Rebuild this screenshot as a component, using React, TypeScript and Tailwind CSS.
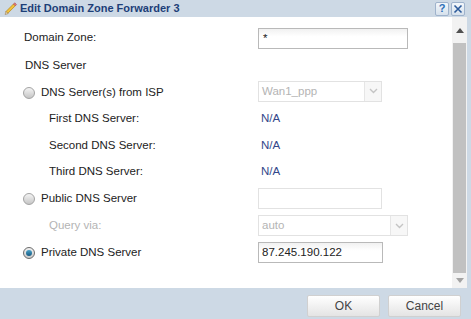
import React from 'react';

// Small radio bullet, grey when off, blue dot when checked
function Radio({ checked = false }: { checked?: boolean }) {
  if (checked) {
    return (
      <span className="flex h-[12px] w-[12px] items-center justify-center rounded-full border border-[#6b6b6b] bg-gradient-to-b from-[#f2f2f2] to-[#c9c9c9]">
        <span className="h-[6px] w-[6px] rounded-full bg-gradient-to-b from-[#4aa3c9] to-[#155a82]" />
      </span>
    );
  }
  return (
    <span className="h-[12px] w-[12px] rounded-full border border-[#a3a3a3] bg-gradient-to-b from-[#f4f4f4] to-[#c6c6c6]" />
  );
}

function Chevron({ color = '#c4c4c4' }: { color?: string }) {
  return (
    <svg width="9" height="6" viewBox="0 0 9 6" fill="none">
      <path d="M1 1l3.5 3.5L8 1" stroke={color} strokeWidth="1.4" />
    </svg>
  );
}

function Select({ value, width }: { value: string; width: string }) {
  return (
    <div className={`flex h-[21px] ${width} border border-[#e2e2e2] bg-white`}>
      <span className="flex-1 pl-[3px] leading-[19px] text-[#b4b4b4]">{value}</span>
      <span className="flex w-[17px] items-center justify-center border-l border-[#e6e6e6] bg-[#f7f7f7]">
        <Chevron />
      </span>
    </div>
  );
}

function Row({ h, children }: { h: string; children: React.ReactNode }) {
  return <div className={`flex items-center ${h}`}>{children}</div>;
}

export default function App() {
  return (
    <div
      className="flex h-[319px] w-[471px] flex-col bg-[#cdd9e5] text-[11.5px] text-[#222]"
      style={{ fontFamily: '"Liberation Sans", Arial, sans-serif' }}
    >
      {/* Title bar */}
      <div className="flex h-[17px] items-center pl-[3px] pr-[6px]">
        <svg width="15" height="15" viewBox="0 0 15 15">
          <path d="M3 10.5L10.5 3l1.8 1.8L4.8 12.3z" fill="#f2c23a" stroke="#b58515" strokeWidth="0.7" />
          <path d="M10.5 3l1.2-1.2 1.8 1.8-1.2 1.2z" fill="#e77a7a" stroke="#a54a4a" strokeWidth="0.6" />
          <path d="M3 10.5l-0.9 3 3-0.9z" fill="#f4dfb0" stroke="#8a6a3a" strokeWidth="0.5" />
        </svg>
        <span className="ml-[2px] text-[11px] font-bold text-[#1d3f78]">Edit Domain Zone Forwarder 3</span>
        <div className="ml-auto flex gap-[2px]">
          <span className="flex h-[14px] w-[14px] items-center justify-center rounded-[2px] border border-[#9fb3cc] bg-gradient-to-b from-[#f3f7fb] to-[#d6e1ec] text-[11px] font-bold leading-none text-[#2c6fb8]">
            ?
          </span>
          <span className="flex h-[14px] w-[14px] items-center justify-center rounded-[2px] border border-[#9fb3cc] bg-gradient-to-b from-[#f3f7fb] to-[#d6e1ec]">
            <svg width="10" height="10" viewBox="0 0 10 10">
              <path d="M1.5 1.5l7 7M8.5 1.5l-7 7" stroke="#2c5a9a" strokeWidth="1.6" />
            </svg>
          </span>
        </div>
      </div>

      {/* Body */}
      <div className="flex h-[271px]">
        <div className="flex-1 bg-white pt-[7px]">
          <Row h="h-[28px]">
            <span className="w-[258px] pl-[24px]">Domain Zone:</span>
            <div className="h-[21px] w-[150px] border border-[#b9b9b9] bg-gradient-to-b from-[#f1f1f1] to-white to-40% pl-[4px] leading-[19px]">
              *
            </div>
          </Row>
          <Row h="h-[28px]">
            <span className="pl-[25px]">DNS Server</span>
          </Row>
          <Row h="h-[25px]">
            <div className="flex w-[258px] items-center gap-[6px] pl-[23px]">
              <Radio />
              <span>DNS Server(s) from ISP</span>
            </div>
            <div className="-mt-[3px]">
              <Select value="Wan1_ppp" width="w-[124px]" />
            </div>
          </Row>
          <Row h="h-[27px]">
            <span className="w-[258px] pl-[49px]">First DNS Server:</span>
            <span className="pl-[3px] text-[#33478a]">N/A</span>
          </Row>
          <Row h="h-[27px]">
            <span className="w-[258px] pl-[49px]">Second DNS Server:</span>
            <span className="pl-[3px] text-[#33478a]">N/A</span>
          </Row>
          <Row h="h-[26px]">
            <span className="w-[258px] pl-[49px]">Third DNS Server:</span>
            <span className="pl-[3px] text-[#33478a]">N/A</span>
          </Row>
          <Row h="h-[27px]">
            <div className="flex w-[258px] items-center gap-[6px] pl-[23px]">
              <Radio />
              <span>Public DNS Server</span>
            </div>
            <div className="h-[21px] w-[124px] border border-[#e2e2e2] bg-white" />
          </Row>
          <Row h="h-[27px]">
            <span className="w-[258px] pl-[49px] text-[#b4b4b4]">Query via:</span>
            <Select value="auto" width="w-[150px]" />
          </Row>
          <Row h="h-[27px]">
            <div className="flex w-[258px] items-center gap-[6px] pl-[23px]">
              <Radio checked />
              <span>Private DNS Server</span>
            </div>
            <div className="h-[21px] w-[125px] border border-[#b9b9b9] bg-gradient-to-b from-[#f1f1f1] to-white to-40% pl-[3px] leading-[19px]">
              87.245.190.122
            </div>
          </Row>
        </div>

        {/* Scrollbar */}
        <div className="flex w-[15px] flex-col items-center bg-[#f2f2f2]">
          <div className="flex h-[26px] w-full items-center justify-center">
            <svg width="8" height="5" viewBox="0 0 8 5">
              <path d="M0 5L4 0l4 5z" fill="#505050" />
            </svg>
          </div>
          <div className="h-[230px] w-[13px] bg-[#c1c1c1]" />
          <div className="flex flex-1 w-full items-center justify-center">
            <svg width="8" height="5" viewBox="0 0 8 5">
              <path d="M0 0l4 5 4-5z" fill="#a3a3a3" />
            </svg>
          </div>
        </div>
        <div className="w-[4px]" />
      </div>

      {/* Footer */}
      <div className="flex flex-1 items-start justify-end gap-[8px] pr-[10px] pt-[7px]">
        <button className="h-[22px] w-[73px] rounded-[2px] border border-[#d0d0d0] bg-gradient-to-b from-white to-[#e4e4e4] text-[12px] text-[#444]">
          OK
        </button>
        <button className="h-[22px] w-[73px] rounded-[2px] border border-[#d0d0d0] bg-gradient-to-b from-white to-[#e4e4e4] text-[12px] text-[#444]">
          Cancel
        </button>
      </div>
    </div>
  );
}
